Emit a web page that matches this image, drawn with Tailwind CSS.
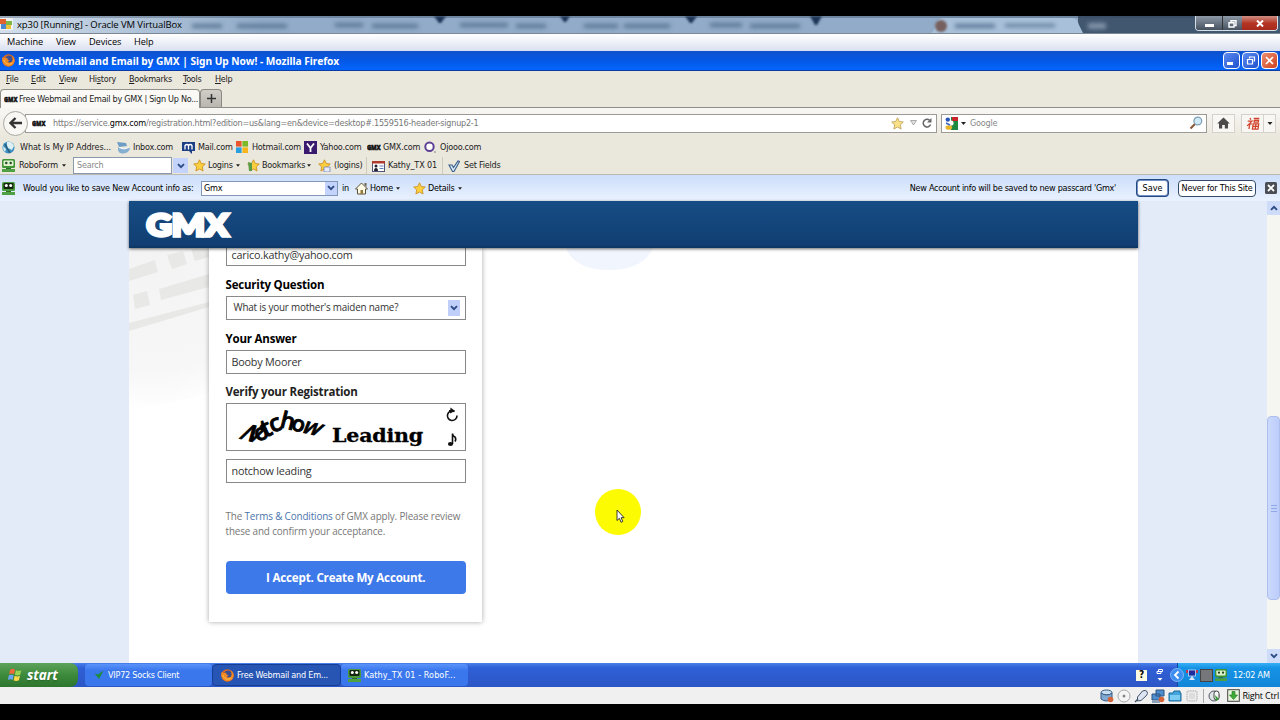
<!DOCTYPE html>
<html lang="en">
<head>
  <meta charset="UTF-8">
  <meta name="viewport" content="width=device-width, initial-scale=1.0">
  <title>xp30 [Running] - Oracle VM VirtualBox</title>
  <script src="https://cdn.jsdelivr.net/npm/@tailwindcss/browser@4"></script>
</head>
<body class="w-[1280px] h-[720px] overflow-hidden bg-black py-4 font-['DejaVu_Sans_Condensed','DejaVu_Sans',sans-serif] text-[9px] leading-none text-[#222] whitespace-nowrap">

  <!-- Shared icons -->
  <svg class="hidden">
    <symbol id="robo" viewBox="0 0 13 13"><rect x="0" y="0" width="13" height="9" rx="1.500" fill="#3f9436"/><rect x="1.500" y="1.500" width="10" height="5.500" rx="1" fill="#dff0cf"/><circle cx="4.300" cy="4" r="1.200" fill="#1f4a1a"/><circle cx="8.700" cy="4" r="1.200" fill="#1f4a1a"/><path d="M0 10h13v3H0z" fill="#4fa042"/><path d="M4 9h5v1H4z" fill="#2f6b28"/></symbol>
    <symbol id="robodark" viewBox="0 0 13 13"><rect x="0" y="0" width="13" height="9" rx="1.500" fill="#4a9a3e"/><rect x="1.500" y="1" width="10" height="6" rx="1" fill="#15240f"/><circle cx="4.300" cy="3.500" r="1.500" fill="#fff"/><circle cx="8.700" cy="3.500" r="1.500" fill="#fff"/><path d="M0 10h13v3H0z" fill="#4fa042"/><path d="M4 9h5v1H4z" fill="#2f6b28"/></symbol>
    <symbol id="star" viewBox="0 0 13 13"><path d="M6.500.8l1.800 3.700 4 .5-3 2.900.8 4.100-3.600-2-3.600 2 .8-4.100-3-2.900 4-.5z" fill="#fbcf3f" stroke="#c98a1c" stroke-width=".8"/></symbol>
    <symbol id="urlstar" viewBox="0 0 13 13"><path d="M6.500.8l1.800 3.700 4 .5-3 2.900.8 4.100-3.600-2-3.600 2 .8-4.100-3-2.900 4-.5z" fill="#fbe08a" stroke="#b99a4e" stroke-width=".8"/></symbol>
    <symbol id="arrow" viewBox="0 0 5 3"><path d="M0 0h5l-2.500 3z" fill="#222"/></symbol>
    <symbol id="chev" viewBox="0 0 8 6"><path d="M1 1.200l3 3 3-3" fill="none" stroke="#2b4a86" stroke-width="1.900"/></symbol>
    <symbol id="firefox" viewBox="0 0 13 13"><circle cx="6.500" cy="6.500" r="6.200" fill="#e2691b"/><circle cx="7" cy="5.200" r="3.600" fill="#3b4f93"/><path d="M.6 3l2 1.200 2.600-.4.3 1.700 2 1-1.700 1.200c1 1.700 3.500 1.200 4.600-.7.800-1.600.4-4-1-5.500 3 1 4 5 2.400 7.800-2 3.400-7.400 4-10 .8-1.700-2-1.900-4.600-1.200-7.100z" fill="#f08a24"/><path d="M2 6c1 4 5 5.500 8.500 3" stroke="#ffc34a" fill="none"/></symbol>
    <symbol id="xpwin" viewBox="0 0 14 13"><path d="M2 1.500q2.500-1.500 4.500 0l-1 4.200q-2-1.200-4.500 0z" fill="#f0683c"/><path d="M7.400 2q2.500 1.200 5 0l-1 4.300q-2.500 1.200-5 0z" fill="#9bd452"/><path d="M.8 6.800q2.500-1.300 4.500 0l-1 4.200q-2-1.200-4.500 0z" fill="#6ba4f2"/><path d="M6.200 7.200q2.500 1.200 5 0l-1 4.300q-2.500 1.200-5 0z" fill="#fcd74a"/></symbol>
    <symbol id="house" viewBox="0 0 13 13"><path d="M6.500 1l6 6h-2v5h-8v-5h-2z" fill="#fffbe6" stroke="#5c5238"/><path d="M9.500 1h2v4l-2-2z" fill="#6f654a"/><rect x="5.500" y="8" width="2.500" height="4" fill="#94793c"/></symbol>
    <symbol id="gmxmark" viewBox="0 0 14 8"><text x="0" y="6.500" textLength="13.500" lengthAdjust="spacingAndGlyphs" font-family="Open Sans" font-weight="800" font-size="7" fill="#111" stroke="#111" stroke-width=".5">GMX</text></symbol>
  </svg>

  <!-- VirtualBox title bar -->
  <div class="relative flex h-[17px] items-center overflow-hidden bg-[#8fa9c6]">
    <div class="absolute inset-0 bg-linear-to-r from-[#d3dfeb] via-[#91abc8] to-[#91abc8] via-[260px]"></div>
    <div class="absolute inset-0">
      <svg class="h-full w-full" viewBox="0 0 1280 17">
        <rect x="1078" y="0" width="202" height="17" fill="#41576f"/>
        <path d="M930 17q4 0 6-9 2-6 6-6h130q5 0 7 7l4 8z" fill="#a9c0da"/>
        <g fill="#1d3557" style="filter:blur(1px)"><path d="M434 0h12l-5 7h-2zM560 0h10l-4 6h-2zM685 0h12l-5 7h-2zM810 0h12l-5 9h-2z"/></g>
        <g style="filter:blur(2px)" fill="#5b7796">
          <rect x="192" y="8" width="30" height="4"/><rect x="237" y="8" width="50" height="4"/><rect x="335" y="7" width="28" height="4"/><rect x="372" y="8" width="46" height="4"/><rect x="460" y="7" width="48" height="4"/><rect x="516" y="8" width="30" height="4"/><rect x="584" y="8" width="34" height="4"/><rect x="624" y="8" width="46" height="4"/><rect x="710" y="7" width="32" height="4"/><rect x="750" y="8" width="50" height="4"/>
          <rect x="955" y="8" width="40" height="4"/><rect x="1005" y="8" width="50" height="3"/><rect x="1088" y="7" width="18" height="6" fill="#8093a8"/>
        </g>
        <circle cx="941" cy="10" r="6" fill="#76605f" style="filter:blur(1px)"/>
        <rect x="0" y="0" width="1280" height="2" fill="#30435a" opacity=".35"/>
      </svg>
    </div>
    <svg class="relative h-[13px] w-[14px]" viewBox="0 0 14 13"><rect width="13" height="12" rx="1" fill="#eef2f3"/><rect x="0" y="1" width="6" height="5" fill="#e2632d"/><rect x="6" y="3" width="6" height="4" fill="#7fb749"/><rect x="1" y="6" width="5" height="5" fill="#4d87cf"/><rect x="6" y="7" width="5" height="4" fill="#edc33c"/></svg>
    <span class="relative ml-[3px] font-['Open_Sans',sans-serif] text-[9.5px] tracking-[-0.1px] text-black">xp30 [Running] - Oracle VM VirtualBox</span>
    <div class="relative ml-auto mr-[2px] flex h-[15px] -mt-[2px] overflow-hidden rounded-b border border-t-0 border-[#d5dde5]">
      <div class="flex w-[27px] items-center justify-center border-r border-[#333] bg-linear-to-b from-[#8d99a7] to-[#46525f]"><span class="mt-1 h-[3px] w-[9px] bg-white"></span></div>
      <div class="flex w-[19px] items-center justify-center bg-linear-to-b from-[#8d99a7] to-[#46525f]"><svg class="mt-px h-[8px] w-[9px]" viewBox="0 0 9 8"><path d="M3 2.500V.7h5v4.800H6.500M1 2.700h5v4.300H1z" fill="none" stroke="#fff" stroke-width="1.400"/></svg></div>
      <div class="flex w-[35px] items-center justify-center bg-linear-to-b from-[#cc8d82] via-[#b53524] to-[#a62a1c]"><svg class="h-[7px] w-[8px]" viewBox="0 0 8 7"><path d="M1 .5l6 6M7 .5l-6 6" stroke="#fff" stroke-width="2"/></svg></div>
    </div>
  </div>

  <!-- VirtualBox menu -->
  <div class="flex h-[18px] items-center border-t border-[#7b8794] bg-linear-to-b from-white via-[#eef0f8] to-[#d9dff0] pb-px pl-[7px] font-['Open_Sans',sans-serif] text-[9.2px] tracking-[-0.05px] text-black">
    <span class="w-[49px]">Machine</span><span class="w-[33px]">View</span><span class="w-[45px]">Devices</span><span>Help</span>
  </div>

  <!-- Firefox title bar -->
  <div class="flex h-[20px] items-center border-b border-[#0a3ba5] bg-linear-to-b from-[#0e52cc] via-[#0458e6] to-[#0365fd] pl-[2px]">
    <svg class="h-[13px] w-[13px]"><use href="#firefox"/></svg>
    <span class="ml-[3px] pt-px font-['Noto_Sans',sans-serif] text-[10.2px] font-bold tracking-[-0.03px] text-white">Free Webmail and Email by GMX | Sign Up Now! - Mozilla Firefox</span>
    <div class="ml-auto mr-[2px] flex gap-[2px]">
      <div class="flex h-[17px] w-[17px] items-end rounded-sm border border-white bg-linear-to-br from-[#5e8bf0] to-[#1f4fcd] p-[3px]"><span class="h-[3px] w-[6px] bg-white"></span></div>
      <div class="flex h-[17px] w-[17px] items-center justify-center rounded-sm border border-white bg-linear-to-br from-[#5e8bf0] to-[#1f4fcd]"><svg class="h-[9px] w-[10px]" viewBox="0 0 10 9"><path d="M3.500 2.500V1h5v4H7.500M1.500 3.500h5v4.500h-5z" fill="none" stroke="#fff" stroke-width="1.200"/></svg></div>
      <div class="flex h-[17px] w-[17px] items-center justify-center rounded-sm border border-white bg-linear-to-br from-[#ea8d70] to-[#cf3f18]"><svg class="h-[9px] w-[9px]" viewBox="0 0 9 9"><path d="M1 1l7 7M8 1l-7 7" stroke="#fff" stroke-width="1.700"/></svg></div>
    </div>
  </div>

  <!-- Firefox menu -->
  <div class="flex h-[18px] items-center bg-[#eae7dc] pb-px pl-[6px] tracking-[-0.25px]">
    <span class="w-[25px]"><u>F</u>ile</span><span class="w-[28px]"><u>E</u>dit</span><span class="w-[30px]"><u>V</u>iew</span><span class="w-[40px]">Hi<u>s</u>tory</span><span class="w-[54px]"><u>B</u>ookmarks</span><span class="w-[32px]"><u>T</u>ools</span><span><u>H</u>elp</span>
  </div>

  <!-- Tabs -->
  <div class="flex h-[19px] border-b border-[#8f8e88] bg-[#eae7dc]">
    <div class="-mb-px flex w-[200px] items-center rounded-t border border-b-0 border-[#908f89] bg-[#faf9f6] pl-[3px]">
      <svg class="h-[8px] w-[14px] shrink-0"><use href="#gmxmark"/></svg>
      <span class="ml-px tracking-[-0.28px]">Free Webmail and Email by GMX | Sign Up No...</span>
    </div>
    <div class="flex w-[22px] items-center justify-center rounded-t border border-b-0 border-[#8a8983] bg-linear-to-b from-[#d0cec7] to-[#b8b6af]"><svg class="h-[9px] w-[9px]" viewBox="0 0 9 9"><path d="M4.500 0v9M0 4.500h9" stroke="#333" stroke-width="1.500"/></svg></div>
  </div>

  <!-- Address bar -->
  <div class="flex h-[30px] items-center bg-linear-to-b from-[#f8f7f4] to-[#eae7dc] pl-[3px]">
    <div class="relative z-10 flex h-[25px] w-[25px] items-center justify-center rounded-full border border-[#aaa8a0] bg-[#f8f7f4]"><svg class="h-[12px] w-[13px]" viewBox="0 0 13 12"><path d="M6.500 1L1.500 6l5 5M2 6h11" fill="none" stroke="#333" stroke-width="2.300"/></svg></div>
    <div class="-ml-[3px] flex h-[19px] w-[912px] items-center border border-[#9c9a94] bg-white pl-[6px] text-[#777]">
      <svg class="h-[8px] w-[14px]"><use href="#gmxmark"/></svg>
      <span class="ml-[7px] tracking-[-0.235px]">https://service.<span class="text-black">gmx.com</span>/registration.html?edition=us&amp;lang=en&amp;device=desktop#.1559516-header-signup2-1</span>
      <svg class="ml-auto h-[13px] w-[13px]"><use href="#urlstar"/></svg>
      <svg class="ml-[6px] h-[6px] w-[7px]" viewBox="0 0 7 6"><path d="M.5.5h6l-3 4.500z" fill="#e2e2e2" stroke="#999" stroke-width=".8"/></svg>
      <svg class="ml-[5px] mr-[4px] h-[10px] w-[10px]" viewBox="0 0 10 10"><path d="M8.600 6.500A3.800 3.800 0 1 1 7.500 2.200" fill="none" stroke="#666" stroke-width="1.500"/><path d="M9.500 0v4.500H5z" fill="#666"/></svg>
    </div>
    <div class="ml-[4px] flex h-[19px] w-[266px] items-center border border-[#9c9a94] bg-white px-[3px] tracking-[-0.2px] text-[#888]">
      <svg class="h-[13px] w-[13px]" viewBox="0 0 13 13"><rect x="6" width="7" height="13" fill="#1d8a3f"/><rect x="7" width="6" height="4" fill="#c8242a"/><circle cx="6" cy="6" r="2.600" fill="#fff"/><path d="M0 0h6v5H0z" fill="#fff"/><circle cx="2.800" cy="2.600" r="2.200" fill="#2653b5"/><ellipse cx="3.800" cy="10.500" rx="3.300" ry="2.300" fill="#e9b52b"/><path d="M1 6l4 2" stroke="#3a66c5" stroke-width="1.500"/></svg>
      <svg class="ml-[3px] h-[3px] w-[5px]"><use href="#arrow"/></svg>
      <span class="ml-[4px]">Google</span>
      <svg class="ml-auto h-[14px] w-[14px]" viewBox="0 0 14 14"><path d="M1.500 12.500l5-5" stroke="#8a5a3a" stroke-width="2.200"/><circle cx="8.800" cy="5" r="3.900" fill="#cfe9f7" stroke="#7f9fb4" stroke-width="1.200"/></svg>
    </div>
    <div class="ml-[5px] flex h-[19px] w-[23px] items-center justify-center border border-[#d4d2ca] bg-[#f8f7f3]"><svg class="h-[12px] w-[13px]" viewBox="0 0 13 12"><path d="M6.500.5l6.300 6h-1.800v5H7.800V8H5.200v3.500H2v-5H.2z" fill="#4a4a4a"/></svg></div>
    <div class="ml-[6px] flex h-[19px] w-[35px] items-center border border-[#d4d2ca] bg-[#f8f7f3] pl-[4px] pr-[2px]"><svg class="h-[13px] w-[14px]" viewBox="0 0 14 14"><path d="M3 1l1 2M1 4.500h4.500L1 9.500M3.500 6.500V13M5.500 7l-1 1M7 1.500h6M8 3.500h4.500v2H8zM7.200 7.500h6v5.500h-6zM7.200 10.200h6M10.200 7.500V13" fill="none" stroke="#d2432c" stroke-width="1.400" transform="skewX(-8) translate(1 0)"/></svg><span class="ml-auto mr-[3px] h-[17px] w-px bg-[#d4d2ca]"></span><svg class="h-[3px] w-[6px]"><use href="#arrow"/></svg></div>
  </div>

  <!-- Bookmarks -->
  <div class="flex h-[18px] items-center bg-[#eae7dc] pl-[2px] tracking-[-0.22px]">
    <div class="flex w-[115px] items-center gap-[5px]"><svg class="h-[13px] w-[13px]" viewBox="0 0 13 13"><circle cx="6.500" cy="6.500" r="6" fill="#3c8fc0"/><path d="M5 1q5-1 7 4l-2 4-4-2-1-3zM1 5l3 3-1 3q-2-2-2-6z" fill="#dff0f5"/><path d="M3 3l2 4 3 5" stroke="#2a5570" stroke-width="1.300" fill="none"/></svg><span class="tracking-[-0.08px]">What Is My IP Addres...</span></div>
    <div class="flex w-[65px] items-center gap-[3px]"><svg class="h-[13px] w-[13px]" viewBox="0 0 13 13"><path d="M0 1l9 1 1 3-8 1z" fill="#6d9dc5"/><path d="M1 6q6 3 11 0l1 2q-2 4-6.500 4.500T1 9z" fill="#86aed0"/><path d="M2 6.500q5 3 10 0" stroke="#fff" fill="none"/></svg><span>Inbox.com</span></div>
    <div class="flex w-[54px] items-center gap-[3px]"><svg class="h-[13px] w-[13px]" viewBox="0 0 13 13"><path d="M0 1h13v9h-3v3l-3-3H0z" fill="#1d3f86"/><path d="M3 8.500V4.500q2-2 3.500 0v4M6.500 4.500q2-2 3.500 0v4" fill="none" stroke="#fff" stroke-width="1.300"/></svg><span>Mail.com</span></div>
    <div class="flex w-[68px] items-center gap-[4px]"><svg class="h-[12px] w-[12px]" viewBox="0 0 12 12"><path d="M0 0h5.600v5.600H0z" fill="#e9562b"/><path d="M6.400 0H12v5.600H6.400z" fill="#7cb928"/><path d="M0 6.400h5.600V12H0z" fill="#2a9fe0"/><path d="M6.400 6.400H12V12H6.400z" fill="#f7b51d"/></svg><span>Hotmail.com</span></div>
    <div class="flex w-[63px] items-center gap-[3px]"><svg class="h-[13px] w-[13px]" viewBox="0 0 13 13"><path d="M0 0h13v13H0z" fill="#3a1a6e"/><path d="M3 2.500l3.500 4.500L10 2.500M6.500 7v4" stroke="#fff" stroke-width="1.800" fill="none"/></svg><span>Yahoo.com</span></div>
    <div class="flex w-[57px] items-center gap-[2px]"><svg class="h-[8px] w-[14px]"><use href="#gmxmark"/></svg><span>GMX.com</span></div>
    <div class="flex items-center gap-[4px]"><svg class="h-[12px] w-[12px]" viewBox="0 0 12 12"><circle cx="5.500" cy="5.800" r="4.200" fill="#fff" stroke="#5d3f94" stroke-width="2"/><circle cx="11" cy="11" r=".8" fill="#777"/></svg><span>Ojooo.com</span></div>
  </div>

  <!-- RoboForm toolbar -->
  <div class="flex h-[19px] items-center border-b border-[#bbb9b0] bg-[#eae7dc] pl-[2px] pt-px tracking-[-0.22px]">
    <div class="flex w-[71px] items-center"><svg class="h-[13px] w-[13px]"><use href="#robo"/></svg><span class="ml-[4px] mr-auto">RoboForm</span><svg class="mr-[7px] h-[3px] w-[4px]"><use href="#arrow"/></svg></div>
    <div class="flex h-[17px] w-[99px] items-center border border-[#8b98ab] bg-white pl-[3px] text-[#888]">Search</div>
    <div class="ml-px flex h-[15px] w-[15px] items-center justify-center bg-[#c3d3fb]"><svg class="h-[6px] w-[8px]"><use href="#chev"/></svg></div>
    <div class="ml-[5px] flex w-[54px] items-center"><svg class="h-[13px] w-[13px]"><use href="#star"/></svg><span class="ml-[2px] mr-auto">Logins</span><svg class="mr-[7px] h-[3px] w-[4px]"><use href="#arrow"/></svg></div>
    <div class="flex w-[71px] items-center"><svg class="h-[13px] w-[13px]" viewBox="0 0 13 13"><use href="#star"/><path d="M1 3l4 1v8H2z" fill="#5c9b46"/></svg><span class="ml-[2px] mr-auto">Bookmarks</span><svg class="mr-[7px] h-[3px] w-[4px]"><use href="#arrow"/></svg></div>
    <div class="flex h-[17px] w-[49px] items-center border-r border-[#ccc9bd]"><svg class="h-[13px] w-[13px]" viewBox="0 0 13 13"><use href="#star"/><path d="M6 8h6v5H6z" fill="#e5ebfa" stroke="#6876a8" stroke-width=".7"/></svg><span class="ml-[3px]">(logins)</span></div>
    <div class="flex h-[17px] w-[76px] items-center border-r border-[#ccc9bd] pl-[5px]"><svg class="h-[12px] w-[13px]" viewBox="0 0 13 12"><rect x=".5" y="1.500" width="12" height="10" fill="#fff" stroke="#557"/><path d="M0 1h13v2.500H0z" fill="#b13a2e"/><circle cx="4" cy="6" r="1.500" fill="#223"/><path d="M2 11q0-3 2-3t2 3z" fill="#223"/><path d="M7.500 6h4M7.500 8.500h4" stroke="#5a83bd"/></svg><span class="ml-[3px] tracking-[-0.15px]">Kathy_TX 01</span></div>
    <div class="ml-[5px] flex items-center"><svg class="h-[12px] w-[12px]" viewBox="0 0 12 12"><path d="M1 5h3l1.500 2.500L10 1l1.500.5L6 11.500H4.500z" fill="#d5e6f5" stroke="#3a5f8a" stroke-width="1.100"/></svg><span class="ml-[4px]">Set Fields</span></div>
  </div>

  <!-- Save bar -->
  <div class="flex h-[26px] items-center bg-linear-to-b from-[#ccdefa] to-[#eaf2fe] pl-[2px] tracking-[-0.22px] text-black">
    <svg class="h-[13px] w-[13px]"><use href="#robodark"/></svg>
    <span class="ml-[8px] w-[178px] tracking-[-0.19px]">Would you like to save New Account info as:</span>
    <div class="flex h-[15px] w-[137px] items-center justify-between border border-[#8297b8] bg-white pl-[2px]">Gmx<div class="flex h-[13px] w-[12px] items-center justify-center bg-[#c3d3fb]"><svg class="h-[6px] w-[8px]"><use href="#chev"/></svg></div></div>
    <span class="ml-[4px] w-[13px]">in</span>
    <div class="flex w-[58px] items-center"><svg class="h-[13px] w-[13px]"><use href="#house"/></svg><span class="ml-[2px] mr-auto">Home</span><svg class="mr-[13px] h-[3px] w-[4px]"><use href="#arrow"/></svg></div>
    <div class="flex w-[49px] items-center"><svg class="h-[13px] w-[13px]"><use href="#star"/></svg><span class="ml-[2px] mr-auto">Details</span><svg class="h-[3px] w-[4px]"><use href="#arrow"/></svg></div>
    <span class="ml-auto tracking-[-0.28px]">New Account info will be saved to new passcard 'Gmx'</span>
    <div class="ml-[20px] flex h-[18px] w-[33px] items-center justify-center rounded-sm border-2 border-[#7391c8] bg-white tracking-normal outline-1 -outline-offset-1 outline-[#234a7c]">Save</div>
    <div class="ml-[9px] flex h-[17px] w-[78px] items-center justify-center rounded-sm border border-[#334a6a] bg-white">Never for This Site</div>
    <svg class="ml-[9px] mr-[3px] h-[12px] w-[12px]" viewBox="0 0 12 12"><rect width="12" height="12" rx="1.500" fill="#4b4f55"/><path d="M3 3l6 6M9 3l-6 6" stroke="#fff" stroke-width="1.800"/></svg>
  </div>

  <!-- Page -->
  <div class="flex h-[462px] justify-between bg-[#e4ebf8] pl-[129px] font-['Open_Sans',sans-serif]">
    <main class="relative w-[1009px] bg-white">
      <svg class="absolute left-0 top-[47px] h-[415px] w-[560px]" viewBox="0 0 560 415">
        <defs><radialGradient id="fade" gradientUnits="userSpaceOnUse" cx="20" cy="0" r="165"><stop offset="0" stop-color="#f3f3f3"/><stop offset=".75" stop-color="#f7f7f8"/><stop offset="1" stop-color="#fff"/></radialGradient></defs>
        <path d="M0 0h170v100Q90 155 0 160z" fill="url(#fade)"/>
        <g fill="#e8e8e6"><path d="M0 21l26-9 3 12-29 9zM38 7l16-4 4 13-15 5zM62 1h18v8l-14 4zM4 47l14-4 3 14-15 4zM30 41l50-15v13l-48 13zM0 75l80-21v5L0 83z"/></g>
        <path d="M437 0h87q-10 22-44 22t-43-22z" fill="#f1f5fd"/>
      </svg>
      <header class="relative z-10 flex h-[47px] items-center border-b-2 border-[#0d3764] bg-linear-to-b from-[#164d84] to-[#113e72] pl-[15px] shadow-[0_1px_3px_rgba(0,0,0,0.6)]">
        <svg class="h-[36px] w-[90px] overflow-visible" viewBox="0 0 90 36"><text x="2.500" y="30" textLength="82" lengthAdjust="spacingAndGlyphs" font-family="Lato" font-weight="900" font-size="31" fill="#fff" stroke="#fff" stroke-width="3.400">GMX</text></svg>
      </header>
      <form class="relative ml-[80px] flex h-[374px] w-[273px] flex-col bg-white pl-[16.5px] pr-4 text-[10.8px] tracking-[-0.2px] text-[#333] shadow-[0_0_5px_rgba(0,0,0,0.35)]">
        <div class="flex h-[18px] items-center border border-t-0 border-[#888] px-[5px] pb-[3px]">carico.kathy@yahoo.com</div>
        <label class="mt-[11px] h-[15px] text-[11.5px] font-bold leading-[15px] text-black">Security Question</label>
        <div class="mt-[4px] flex h-[24px] items-center justify-between border border-[#888] pb-px pl-[7px] pr-[5px] text-[9.9px]">What is your mother's maiden name?<span class="flex h-[16px] w-[12px] items-center justify-center bg-[#bfcffa]"><svg class="h-[6px] w-[8px]"><use href="#chev"/></svg></span></div>
        <label class="mt-[11px] h-[15px] text-[11.5px] font-bold leading-[15px] text-black">Your Answer</label>
        <div class="mt-[4px] flex h-[24px] items-center border border-[#888] px-[5px]">Booby Moorer</div>
        <label class="mt-[10px] h-[15px] text-[11.5px] font-bold leading-[15px] text-[#222]">Verify your Registration</label>
        <div class="mt-[4px] h-[48px] border border-[#888]">
          <svg class="h-[46px] w-[238px]" viewBox="0 0 238 46">
            <g font-family="Open Sans" font-weight="600" fill="#000" stroke="#000" stroke-width=".8">
              <text transform="translate(10 34) rotate(14) skewX(-32)" font-size="23">N</text><text transform="translate(30 38) rotate(-20)" font-size="23">o</text><text transform="translate(38 34) rotate(-25)" font-size="25">t</text><text transform="translate(45 29) rotate(-20)" font-size="24">c</text><text transform="translate(52 23) rotate(14)" font-size="23">h</text><text transform="translate(63 25) rotate(18)" font-size="22">o</text><text transform="translate(73 28) rotate(12) skewX(-24)" font-size="22">w</text>
            </g>
            <text x="105" y="38" textLength="91" lengthAdjust="spacingAndGlyphs" font-family="DejaVu Serif" font-weight="700" font-size="19" fill="#000" stroke="#000" stroke-width=".3">Leading</text>
            <path d="M227.500 7.500a4.800 4.800 0 1 0 2.500 4M222 6.800h3.500" fill="none" stroke="#111" stroke-width="1.600"/><path d="M223.500 3.500l4.500 3.500-5 2.500z" fill="#111"/>
            <path d="M225.500 40V29.500q0 2.500 2.500 3.500 1.500 2 0 4.500" fill="none" stroke="#111" stroke-width="1.600"/><ellipse cx="223.500" cy="40" rx="2.600" ry="2" fill="#111"/>
          </svg>
        </div>
        <div class="mt-[8px] flex h-[24px] items-center border border-[#888] px-[5px]">notchow leading</div>
        <p class="mt-[26px] h-[29px] text-[9.9px] leading-[14.5px] tracking-[-0.14px] text-[#777]">The <span class="text-[#4a74ad]">Terms &amp; Conditions</span> of GMX apply. Please review<br>these and confirm your acceptance.</p>
        <div class="mt-[23px] flex h-[33px] items-center justify-center rounded-sm bg-[#3e79ea] text-[11.6px] font-bold text-white">I Accept. Create My Account.</div>
      </form>
      <!-- Mouse pointer -->
      <div class="absolute left-[466px] top-[288px] h-[46px] w-[46px] rounded-full bg-[#fdfb02]"></div>
      <svg class="absolute left-[487px] top-[308px] h-[15px] w-[10px]" viewBox="0 0 10 15"><path d="M1 1v10.500l2.400-2.200 1.700 4 1.700-.8-1.700-3.800h3z" fill="#fff" stroke="#222" stroke-width=".9"/></svg>
    </main>
    <!-- Scrollbar -->
    <div class="flex w-[13px] flex-col bg-[#f5f5f2]">
      <div class="flex h-[14px] items-center justify-center bg-[#cfdcf9]"><svg class="h-[6px] w-[8px] rotate-180"><use href="#chev"/></svg></div>
      <div class="mt-auto flex h-[184px] flex-col items-center justify-center gap-[2px] rounded-sm border border-[#aebfee] bg-linear-to-r from-[#cbd9fd] to-[#bccdfa]"><i class="h-px w-[6px] bg-[#8fa9e6]"></i><i class="h-px w-[6px] bg-[#8fa9e6]"></i><i class="h-px w-[6px] bg-[#8fa9e6]"></i></div>
      <div class="mt-[49px] flex h-[14px] items-center justify-center bg-[#cfdcf9]"><svg class="h-[6px] w-[8px]"><use href="#chev"/></svg></div>
    </div>
  </div>

  <!-- Taskbar -->
  <div class="flex h-[24px] bg-linear-to-b from-[#4a80ea] via-[#2f60d6] via-20% to-[#2c56c6] tracking-[-0.22px] text-white">
    <div class="mr-[7px] flex w-[78px] items-center rounded-r-lg bg-linear-to-b from-[#5da35a] via-[#3c8a3b] to-[#2e752e] pl-[8px]">
      <svg class="h-[14px] w-[15px]"><use href="#xpwin"/></svg>
      <span class="ml-[4px] pt-px font-['Open_Sans',sans-serif] text-[13.5px] font-bold italic tracking-[-0.1px] text-shadow-sm">start</span>
    </div>
    <div class="my-px flex w-[127px] items-center rounded-sm bg-linear-to-b from-[#5b93fb] to-[#3a77ec] to-30% pl-[10px]"><svg class="h-[8px] w-[8px]" viewBox="0 0 8 8"><path d="M.5 3l2.500 1L7.500.5 4 7.500z" fill="#1f8a45" stroke="#1f8a45"/></svg><span class="ml-[5px]">VIP72 Socks Client</span></div>
    <div class="my-px flex w-[129px] items-center rounded-sm border border-[#173e97] bg-[#2655b4] pl-[8px]"><svg class="h-[13px] w-[13px]"><use href="#firefox"/></svg><span class="ml-[3px] pt-px">Free Webmail and Em...</span></div>
    <div class="my-px flex w-[127px] items-center rounded-sm bg-linear-to-b from-[#5b93fb] to-[#3a77ec] to-30% pl-[7px]"><svg class="h-[13px] w-[13px]"><use href="#robodark"/></svg><span class="ml-[3px] tracking-[0.08px]">Kathy_TX 01 - RoboF...</span></div>
    <div class="ml-auto flex items-center gap-[9px] pr-[13px]">
      <div class="flex h-[11px] w-[11px] items-center justify-center bg-[#fdfbe2] text-[10px] font-bold text-black">?</div>
      <svg class="h-[14px] w-[8px]" viewBox="0 0 8 14"><path d="M2.500 1.500h4v2h-4zM1 3.500h4v2H1z" fill="none" stroke="#fff"/><path d="M1.500 10h5L4 12.800z" fill="#fff"/></svg>
    </div>
    <div class="flex w-[103px] items-center border-l border-[#1549a8] bg-linear-to-b from-[#35b0f5] via-[#1593e6] via-20% to-[#1286d8]">
      <svg class="-ml-[8px] h-[14px] w-[14px]" viewBox="0 0 14 14"><circle cx="7" cy="7" r="6.500" fill="#3c8ef0" stroke="#8fc5fb" stroke-width=".8"/><path d="M8.500 3.500L5 7l3.500 3.500" stroke="#fff" stroke-width="1.800" fill="none"/></svg>
      <svg class="ml-[2px] h-[12px] w-[12px]" viewBox="0 0 12 12"><rect x="2.500" y="1" width="7" height="6" fill="#1d2e9c" stroke="#c9d7ff" stroke-width=".8"/><path d="M3 11l3-4 3 4z" fill="#dce5ff"/><path d="M0 1h2v3H0zM10 1h2v3h-2z" fill="#c23a4c"/></svg>
      <span class="ml-[2px] h-[13px] w-[13px] border border-[#444] bg-[#75777a]"></span>
      <svg class="ml-[2px] h-[12px] w-[12px]"><use href="#robo"/></svg>
      <span class="ml-[6px]">12:02 AM</span>
    </div>
  </div>

  <!-- VirtualBox status bar -->
  <div class="flex h-[17px] items-center justify-end gap-[3px] bg-[#f0f0f0] pr-[1px]">
    <svg class="h-[14px] w-[14px]" viewBox="0 0 14 14"><ellipse cx="6.500" cy="3.500" rx="5.500" ry="2.500" fill="#c9ddf0" stroke="#345a82"/><path d="M1 4v6q5 4 11 0V4q-5 4-11 0z" fill="#7fa9d3" stroke="#345a82"/><circle cx="10.500" cy="10.500" r="2.800" fill="#d4643a"/></svg>
    <svg class="h-[14px] w-[14px]" viewBox="0 0 14 14"><circle cx="7" cy="7" r="6" fill="#f5f5f5" stroke="#aaa"/><circle cx="7" cy="7" r="1.500" fill="#888"/></svg>
    <svg class="h-[14px] w-[14px]" viewBox="0 0 14 14"><path d="M3.500 8l5-6q3-1.500 4.500.5t-1 4.500l-5 4.500-3.500.5z" fill="#dbe4f0" stroke="#43536d"/><path d="M1 13l3-3" stroke="#43536d" stroke-width="1.500"/></svg>
    <svg class="h-[14px] w-[14px]" viewBox="0 0 14 14"><path d="M5 1h8v6H5zM1 5h8v6H1z" fill="#4f8fd0" stroke="#2b527f"/><path d="M1 13h8" stroke="#2b527f"/><circle cx="10.500" cy="10.500" r="2.800" fill="#d4643a"/></svg>
    <svg class="h-[14px] w-[14px]" viewBox="0 0 14 14"><path d="M1 4h4l1-2h6v2h1v8H1z" fill="#42a4dd" stroke="#1d6a9c"/><path d="M2 6h10v5H2z" fill="#7bcbf2"/></svg>
    <svg class="h-[14px] w-[14px]" viewBox="0 0 14 14"><rect x="2" y="2" width="10" height="10" rx="1" fill="#ededed" stroke="#aaa" stroke-dasharray="1.500 .7"/><rect x="4" y="4" width="6" height="6" fill="#ddd"/></svg>
    <span class="mx-px h-[14px] w-px bg-[#aaa]"></span>
    <svg class="h-[14px] w-[14px]" viewBox="0 0 14 14"><circle cx="6" cy="7" r="5" fill="#dfe5e6" stroke="#556"/><rect x="6" y="2" width="5" height="9" rx="2.500" fill="#f5f5f5" stroke="#444"/><path d="M7 6l4 4-3 2z" fill="#3c9b3c"/></svg>
    <svg class="ml-[2px] h-[13px] w-[13px]" viewBox="0 0 13 13"><rect x=".7" y=".7" width="11.600" height="11.600" fill="#e8f7dc" stroke="#444"/><path d="M5 2.500h3V6h2.500l-4 4.500L2.500 6H5z" fill="#3fae36" stroke="#1f6a1c" stroke-width=".6"/></svg>
    <span class="-ml-px font-['Open_Sans',sans-serif] text-[9px] tracking-[-0.2px] text-black">Right Ctrl</span>
  </div>
</body>
</html>
